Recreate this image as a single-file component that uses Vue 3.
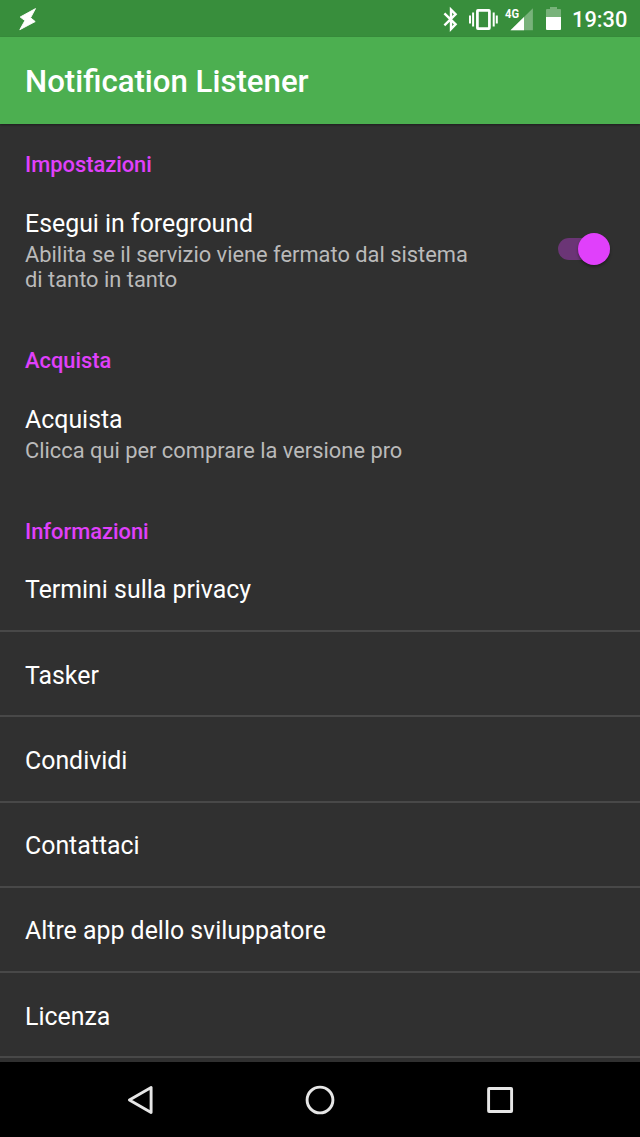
<script setup>
import { ref } from 'vue'

const foreground = ref(true)
const links = ['Termini sulla privacy', 'Tasker', 'Condividi', 'Contattaci', 'Altre app dello sviluppatore', 'Licenza']
</script>

<template>
  <div class="screen">
    <header class="status">
      <svg class="bolt" width="20" height="26" viewBox="0 0 20 26"><path d="M16.5 2.6 1.2 11 5.9 14.6.8 23.7 16.2 15.6 11.6 11.8Z" /></svg>
      <div class="indicators">
        <svg width="100" height="30" viewBox="0 0 100 30">
          <g fill="none" stroke="#fff">
            <path d="M1.4 9.3 12.6 20.3 8 25V5.6L12.6 10.3 1.4 21.3" stroke-width="2.4" />
            <rect x="34.4" y="6.4" width="12" height="18.2" rx=".5" stroke-width="2.7" />
            <path d="M30.1 8.5v14M50.7 8.5v14M27 11.5v8M53.8 11.5v8" stroke-width="2" />
          </g>
          <path d="M89.9 4.2V26.2H67.5Z" fill="#fff" opacity=".32" />
          <path d="M81 13V26.2H67.5Z" fill="#fff" />
          <text x="62" y="14.2" class="network" textLength="14" lengthAdjust="spacingAndGlyphs">4G</text>
        </svg>
        <svg class="battery" width="15" height="24" viewBox="0 0 15 24">
          <path d="M0 10V3Q0 2 1 2H4V0H11V2H14Q15 2 15 3V10Z" fill="#fff" opacity=".32" />
          <path d="M0 10H15V22Q15 23 14 23H1Q0 23 0 22Z" fill="#fff" />
        </svg>
        <span class="clock">19:30</span>
      </div>
    </header>
    <div class="toolbar"><h1>Notification Listener</h1></div>
    <main>
      <section class="settings">
        <h2>Impostazioni</h2>
        <div class="preference">
          <div>
            <h3>Esegui in foreground</h3>
            <p>Abilita se il servizio viene fermato dal sistema<br>di tanto in tanto</p>
          </div>
          <button class="switch" :class="{ on: foreground }" role="switch" :aria-checked="foreground" aria-label="Esegui in foreground" @click="foreground = !foreground"><span class="track"><i></i></span></button>
        </div>
      </section>
      <section class="purchase">
        <h2>Acquista</h2>
        <div class="preference">
          <div>
            <h3>Acquista</h3>
            <p>Clicca qui per comprare la versione pro</p>
          </div>
        </div>
      </section>
      <section>
        <h2>Informazioni</h2>
        <div class="links">
          <div v-for="link in links" :key="link" class="link">{{ link }}</div>
        </div>
      </section>
    </main>
    <nav>
      <svg width="28" height="32" viewBox="0 0 28 32"><path d="M3.4 16 25.1 3.4V28.6Z" /></svg>
      <svg width="32" height="32" viewBox="0 0 32 32"><circle cx="16" cy="16" r="12.9" /></svg>
      <svg width="28" height="28" viewBox="0 0 28 28"><rect x="2.6" y="2.5" width="23" height="23" rx=".5" /></svg>
    </nav>
  </div>
</template>

<style>
body { margin: 0; background: #303030; }
</style>

<style scoped>
.screen {
  width: 640px;
  height: 1137px;
  display: flex;
  flex-direction: column;
  overflow: hidden;
  background: #303030;
  color: #fff;
  font-family: Roboto, "Noto Sans", sans-serif;
}
h1, h2, h3, p { margin: 0; }
.status {
  height: 37px;
  flex: none;
  box-sizing: border-box;
  padding: 0 12px 0 19px;
  display: flex;
  align-items: center;
  justify-content: space-between;
  background: #388e3c;
}
.bolt { fill: #fff; stroke: #fff; stroke-width: .9; stroke-linejoin: round; }
.indicators { display: flex; align-items: center; }
.network { fill: #fff; font-size: 13px; font-weight: 700; }
.battery { margin-left: 3px; }
.clock { margin-left: 11px; width: 56px; padding-top: 2px; font-size: 21.8px; font-weight: 500; line-height: 35px; white-space: nowrap; }
.toolbar {
  height: 87px;
  flex: none;
  box-sizing: border-box;
  padding: 3px 0 0 25px;
  display: flex;
  align-items: center;
  background: #4caf50;
  box-shadow: 0 1px 2px rgba(0, 0, 0, .4);
}
h1 { font-size: 31.2px; font-weight: 500; line-height: 40px; }
main { flex: 1; min-height: 0; overflow: hidden; padding-top: 13px; }
h2 { height: 56px; padding-left: 25px; line-height: 56px; font-size: 21.85px; font-weight: 500; color: #e040fb; }
.settings { height: 196px; }
.purchase { height: 170.5px; }
.preference { padding: 16px 30px 0 25px; display: flex; justify-content: space-between; }
h3 { font-size: 24.88px; font-weight: 400; line-height: 29px; }
p { margin-top: 4px; font-size: 21.85px; line-height: 25.3px; color: #bababa; }
.switch { height: 32px; margin-top: 24px; padding: 0; border: 0; display: flex; align-items: center; background: none; }
.track { width: 52px; height: 22px; display: flex; align-items: center; border-radius: 11px; background: #6b3576; }
.track i { width: 32px; height: 32px; flex: none; border-radius: 50%; background: #bababa; box-shadow: 0 2px 3px rgba(0, 0, 0, .35); }
.on .track i { margin-left: 20px; background: #e040fb; }
.links { margin-top: -12.9px; }
.link {
  height: 85.3px;
  box-sizing: border-box;
  padding: 3px 25px 0;
  display: flex;
  align-items: center;
  border-bottom: 2px solid #484848;
  font-size: 24.88px;
}
nav {
  height: 75px;
  flex: none;
  box-sizing: border-box;
  padding: 0 126px;
  display: flex;
  align-items: center;
  justify-content: space-between;
  background: #000;
}
nav svg { fill: none; stroke: #e6e6e6; stroke-width: 2.9; stroke-linejoin: round; }
</style>
